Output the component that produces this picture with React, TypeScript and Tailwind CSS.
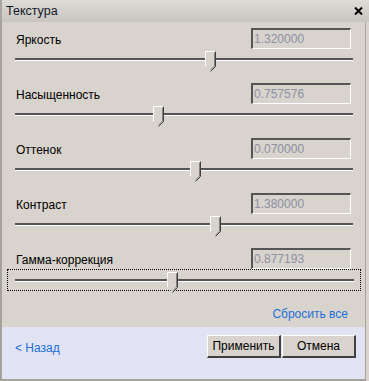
import React from 'react'

const rows = [
  { label: 'Яркость', value: '1.320000', thumb: 205 },
  { label: 'Насыщенность', value: '0.757576', thumb: 153 },
  { label: 'Оттенок', value: '0.070000', thumb: 190 },
  { label: 'Контраст', value: '1.380000', thumb: 210 },
  { label: 'Гамма-коррекция', value: '0.877193', thumb: 167, focused: true },
]

function Thumb() {
  return (
    <svg width="12" height="21" viewBox="0 0 12 21" className="block">
      <path d="M0.5 0.5 H10.5 V15.5 L5.5 20.5 L0.5 15.5 Z" fill="#d8d3cc" />
      <path d="M0.5 15.5 V0.5 H10.5" fill="none" stroke="#ffffff" />
      <path d="M10.5 0.5 V15.5 L5.5 20.5" fill="none" stroke="#404040" />
      <path d="M9.5 1.5 V15 L5.5 19" fill="none" stroke="#808080" />
    </svg>
  )
}

function Slider({ thumb, focused }: { thumb: number; focused?: boolean }) {
  return (
    <div
      className={`relative h-[22px] ${focused ? 'mx-[-8px] border border-dotted border-black' : ''}`}
    >
      <div
        className={`absolute right-0 top-[9px] h-[3px] border-t-2 border-[#555555] border-b border-b-white ${
          focused ? 'left-[7px] right-[6px]' : 'left-0'
        }`}
      />
      <div className="absolute top-[2px]" style={{ left: thumb - 15 + (focused ? 7 : 0) }}>
        <Thumb />
      </div>
    </div>
  )
}

export default function App() {
  return (
    <div
      className="w-[369px] h-[381px] bg-[#d8d3cc] flex flex-col text-[12px] text-black"
      style={{ fontFamily: '"Liberation Sans", Arial, sans-serif' }}
    >
      {/* Title bar */}
      <div className="h-[22px] flex items-center justify-between pl-[4px] pr-[6px] bg-gradient-to-b from-[#dedbd6] to-[#c8c4be] border-l-2 border-[#aaa6a0]">
        <span className="text-[12.5px] text-[#101828]">Текстура</span>
        <svg width="9" height="8" viewBox="0 0 9 8">
          <path d="M1 0.5 L8 7.5 M8 0.5 L1 7.5" stroke="#000" strokeWidth="2" />
        </svg>
      </div>

      <div className="flex-1 flex flex-col border-l-2 border-r border-b-2 border-[#a6a29c] mr-[3px]">
        <div className="pl-[13px] pr-[12px]">
          {rows.map((r) => (
            <div key={r.label} className="pt-[6px] pb-[6px] last:pb-0">
              <div className="flex items-center justify-between h-[21px] pr-[2px]">
                <span className="pl-[1px] pt-[2px]">{r.label}</span>
                <div className="w-[100px] h-[21px] flex items-center pl-[1px] border-t-2 border-l-2 border-[#555555] border-b border-r border-b-white border-r-white text-[#8b90a3]">
                  {r.value}
                </div>
              </div>
              <Slider thumb={r.thumb} focused={r.focused} />
            </div>
          ))}
        </div>

        <div className="flex justify-end pr-[17px] pt-[14px] h-[36px]">
          <span className="text-[#1c6fd9]">Сбросить все</span>
        </div>

        <div className="flex-1 bg-[#e1e3f2] flex items-start justify-between pl-[13px] pr-[9px] pt-[8px]">
          <span className="mt-[4px] text-[#1c6fd9]">&lt; Назад</span>
          <div className="flex gap-[1px]">
            <button className="w-[74px] h-[23px] bg-[#d8d3cc] border-t border-l border-white border-b-2 border-r-2 border-b-[#404040] border-r-[#404040]">
              Применить
            </button>
            <button className="w-[74px] h-[23px] bg-[#d8d3cc] border-t border-l border-white border-b-2 border-r-2 border-b-[#404040] border-r-[#404040]">
              Отмена
            </button>
          </div>
        </div>
      </div>
    </div>
  )
}
